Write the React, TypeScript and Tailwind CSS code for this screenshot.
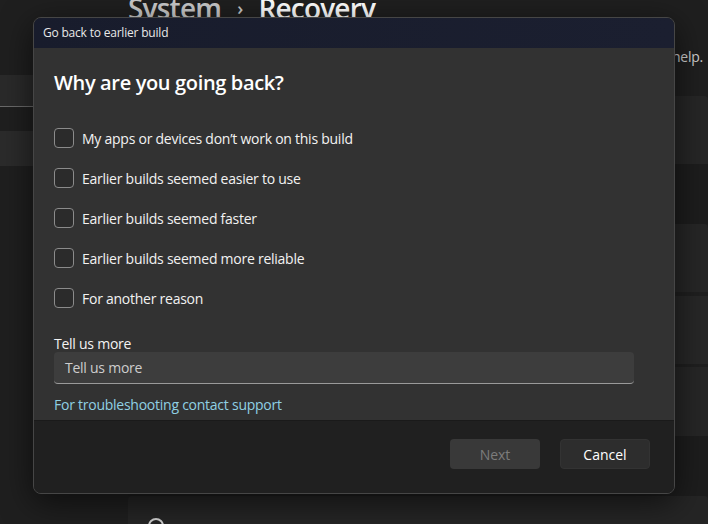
import React from 'react';

const REASONS = [
  'My apps or devices don’t work on this build',
  'Earlier builds seemed easier to use',
  'Earlier builds seemed faster',
  'Earlier builds seemed more reliable',
  'For another reason',
];

const FONT = { fontFamily: '"Open Sans", "Noto Sans", sans-serif' };

function Checkbox({ label }: { label: string }) {
  return (
    <label className="flex items-center gap-[8px] h-[40px] cursor-pointer">
      <span className="w-[20px] h-[20px] rounded-[4px] border border-[#8b8b8b] bg-[#2b2b2b]" />
      <span className="text-[14px] tracking-[-0.25px] text-[#f2f2f2]">{label}</span>
    </label>
  );
}

function SettingsBackdrop() {
  return (
    <div className="flex h-[524px] overflow-hidden bg-[#1f1f1f]">
      {/* sidebar */}
      <div className="w-[112px] shrink-0 pt-[75px]">
        <div className="h-[32px] bg-[#2a2a2a] border-b border-[#6a6a6a]" />
        <div className="h-[24px]" />
        <div className="h-[35px] bg-[#2b2b2b]" />
      </div>
      {/* main */}
      <div className="flex-1 pl-[16px] -mt-[10px]">
        <div className="flex items-center gap-[16px] text-[28px] font-semibold leading-[36px] tracking-[-0.8px]">
          <span className="text-[#c8c8c8]">System</span>
          <span className="text-[#c8c8c8] text-[18px]">›</span>
          <span className="text-white">Recovery</span>
        </div>
        <div className="mt-[20px] flex justify-end text-[14px] tracking-[-0.25px] text-[#cfcfcf] pr-[5px]">
          If you're having problems with your PC, these recovery options might help.
        </div>
        <div className="mt-[29px] flex flex-col">
          <div className="h-[68px] bg-[#262626] rounded-t-[4px]" />
          <div className="h-[60px] bg-[#1d1d1d]" />
          <div className="h-[68px] bg-[#262626] rounded-t-[4px]" />
          <div className="h-[4px]" />
          <div className="h-[68px] bg-[#272727]" />
          <div className="h-[3px]" />
          <div className="h-[69px] bg-[#262626]" />
          <div className="h-[60px] bg-[#1d1d1d]" />
          <div className="h-[60px] bg-[#252525] rounded-t-[4px] pl-[20px] pt-[22px]">
            <div className="w-[16px] h-[16px] rounded-full border-2 border-[#cfcfcf]" />
          </div>
        </div>
      </div>
    </div>
  );
}

export default function App() {
  return (
    <div className="relative w-[708px] h-[524px] overflow-hidden" style={FONT}>
      <SettingsBackdrop />

      {/* dialog */}
      <div className="absolute left-[33px] top-[17px] w-[642px] h-[477px] flex flex-col rounded-[8px] border border-[#464646] overflow-hidden shadow-[0_8px_32px_rgba(0,0,0,0.6)]">
        <div className="h-[30px] shrink-0 bg-gradient-to-r from-[#181c2c] to-[#1b1f30] flex items-center pl-[9px] text-[12px] tracking-[-0.2px] text-[#e8e8e8]">
          Go back to earlier build
        </div>
        <div className="flex-1 bg-[#323232] pl-[20px] pr-[40px] pt-[21px]">
          <h1 className="text-[20px] font-semibold text-white leading-[28px] tracking-[-0.35px]">Why are you going back?</h1>
          <div className="mt-[21px] flex flex-col">
            {REASONS.map(r => (
              <Checkbox key={r} label={r} />
            ))}
          </div>
          <div className="mt-[16px] text-[14px] tracking-[-0.25px] text-[#f2f2f2] leading-[20px]">Tell us more</div>
          <div className="mt-[-2px] h-[32px] rounded-[4px] bg-[#3d3d3d] border-b border-[#9a9a9a] flex items-center pl-[11px] text-[14px] tracking-[-0.25px] text-[#cdcdcd]">
            Tell us more
          </div>
          <a href="#" className="block mt-[11px] text-[14px] tracking-[-0.25px] text-[#8fd0e3] leading-[20px]">
            For troubleshooting contact support
          </a>
        </div>
        <div className="h-[73px] shrink-0 bg-[#202020] border-t border-[#1a1a1a] flex items-start justify-end gap-[20px] pr-[24px] pt-[18px]">
          <button className="w-[90px] h-[30px] rounded-[4px] bg-[#393939] text-[14px] text-[#7c7c7c]" disabled>
            Next
          </button>
          <button className="w-[90px] h-[30px] rounded-[4px] bg-[#2d2d2d] border border-[#333] text-[14px] text-white">
            Cancel
          </button>
        </div>
      </div>
    </div>
  );
}
